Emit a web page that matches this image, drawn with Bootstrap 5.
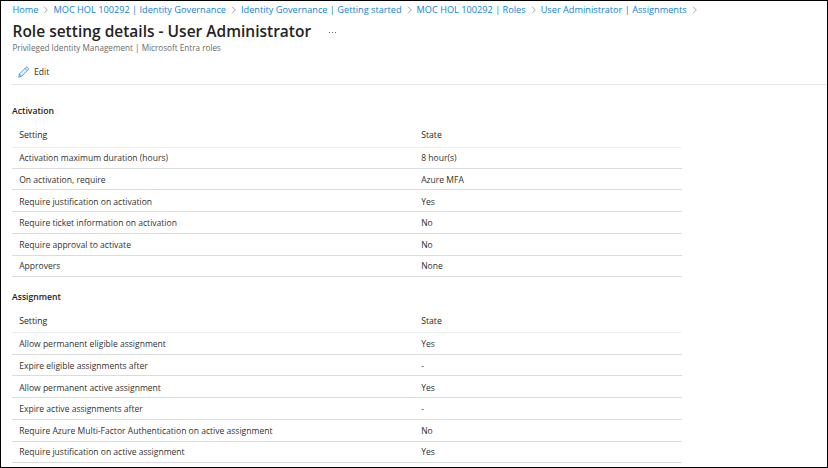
<!DOCTYPE html>
<html lang="en">
<head>
<meta charset="utf-8">
<title>Role setting details - User Administrator</title>
<link href="https://cdn.jsdelivr.net/npm/bootstrap@5.3.0/dist/css/bootstrap.min.css" rel="stylesheet">
<style>
  body { font-family: "Open Sans", "Noto Sans", sans-serif; font-size: 8.56px; line-height: 12px; color: #323130; }
  .blade { height: 468px; border: 1px solid #000; padding-left: 11px; }
  .trail { height: 19px; padding: 0 0 2px .5px; font-size: 9.2px; }
  .trail a { color: #0f7fd6; }
  .trail svg { width: 15px; height: 8px; margin-top: 1px; }
  .blade-title { font-size: 15.5px; line-height: 22px; padding-left: .5px; font-weight: 600; color: #24231f; }
  .more { margin-left: 17px; width: 9px; height: 3px; margin-top: 2px; }
  .blade-sub { font-size: 8.17px; line-height: 11px; padding-left: .4px; color: #6c6a68; }
  .commands { height: 32px; border-bottom: 1px solid #e4e4e4; padding: 6px 0 0 6px; }
  .commands button { color: #323130; gap: 5px; }
  .group-name { font-size: 8.65px; line-height: 12px; font-weight: 600; color: #1f1e1c; }
  .settings { width: 670px; table-layout: fixed; border-collapse: separate; border-spacing: 0; }
  .settings th, .settings td { padding: 0 0 0 7.2px; vertical-align: middle; border-bottom: 1px solid #dadbdc; }
  .settings th { height: 25px; font-weight: 400; font-size: 8.68px; border-color: #efefef; color: #262523; }
  .settings th:first-child { width: 402px; }
  .settings tr:nth-child(2) td, .settings tr:nth-child(3) td { padding-top: 2px; }
  .activation { padding-top: 20px; }
  .activation .settings { margin-top: 6px; }
  .assignment { padding-top: 14px; }
  .assignment .settings { margin-top: 7px; }
  .assignment th { height: 23px; }
  .tall td { height: 22px; }
  .short td { height: 21px; }
</style>
</head>
<body>
<main class="blade overflow-hidden bg-white">
  <nav aria-label="breadcrumb">
    <ol class="trail list-unstyled d-flex align-items-center mb-0 text-nowrap">
      <li class="d-flex align-items-center"><a class="text-decoration-none" href="#">Home</a><svg viewBox="0 0 15 8" fill="none" stroke="#a5a5a5"><path d="M6 .7 9.3 4 6 7.3"/></svg></li>
      <li class="d-flex align-items-center"><a class="text-decoration-none" href="#">MOC HOL 100292 | Identity Governance</a><svg viewBox="0 0 15 8" fill="none" stroke="#a5a5a5"><path d="M6 .7 9.3 4 6 7.3"/></svg></li>
      <li class="d-flex align-items-center"><a class="text-decoration-none" href="#">Identity Governance | Getting started</a><svg viewBox="0 0 15 8" fill="none" stroke="#a5a5a5"><path d="M6 .7 9.3 4 6 7.3"/></svg></li>
      <li class="d-flex align-items-center"><a class="text-decoration-none" href="#">MOC HOL 100292 | Roles</a><svg viewBox="0 0 15 8" fill="none" stroke="#a5a5a5"><path d="M6 .7 9.3 4 6 7.3"/></svg></li>
      <li class="d-flex align-items-center"><a class="text-decoration-none" href="#">User Administrator | Assignments</a><svg viewBox="0 0 15 8" fill="none" stroke="#a5a5a5"><path d="M6 .7 9.3 4 6 7.3"/></svg></li>
    </ol>
  </nav>
  <header>
    <div class="d-flex align-items-center">
      <h1 class="blade-title mb-0">Role setting details - User Administrator</h1>
      <svg class="more" viewBox="0 0 9 3" fill="#605e5c"><path d="M1 1h1v1H1zM4 1h1v1H4zM7 1h1v1H7z"/></svg>
    </div>
    <p class="blade-sub mb-0">Privileged Identity Management | Microsoft Entra roles</p>
  </header>
  <div class="commands d-flex align-items-center">
    <button class="d-flex align-items-center border-0 bg-transparent p-0" type="button">
      <svg width="11" height="12" viewBox="0 0 11 12" fill="#e6f3fc" stroke="#3a96dd" stroke-width=".9" stroke-linejoin="round"><path d="M.6 11.2 1.4 8 8 1.4Q8.7.7 9.4 1.4L10.2 2.2Q10.9 2.9 10.2 3.6L3.6 10.3ZM7 2.4 9.2 4.6M1.4 8 3.6 10.3"/></svg>
      <span>Edit</span>
    </button>
  </div>
  <section class="activation">
    <h2 class="group-name mb-0">Activation</h2>
    <table class="settings">
      <thead><tr><th>Setting</th><th>State</th></tr></thead>
      <tbody>
        <tr class="short"><td>Activation maximum duration (hours)</td><td>8 hour(s)</td></tr>
        <tr class="short"><td>On activation, require</td><td>Azure MFA</td></tr>
        <tr class="tall"><td>Require justification on activation</td><td>Yes</td></tr>
        <tr class="tall"><td>Require ticket information on activation</td><td>No</td></tr>
        <tr class="tall"><td>Require approval to activate</td><td>No</td></tr>
        <tr class="short"><td>Approvers</td><td>None</td></tr>
      </tbody>
    </table>
  </section>
  <section class="assignment">
    <h2 class="group-name mb-0">Assignment</h2>
    <table class="settings">
      <thead><tr><th>Setting</th><th>State</th></tr></thead>
      <tbody>
        <tr class="tall"><td>Allow permanent eligible assignment</td><td>Yes</td></tr>
        <tr class="short"><td>Expire eligible assignments after</td><td>-</td></tr>
        <tr class="tall"><td>Allow permanent active assignment</td><td>Yes</td></tr>
        <tr class="tall"><td>Expire active assignments after</td><td>-</td></tr>
        <tr class="tall"><td>Require Azure Multi-Factor Authentication on active assignment</td><td>No</td></tr>
        <tr class="short"><td>Require justification on active assignment</td><td>Yes</td></tr>
      </tbody>
    </table>
  </section>
</main>
<script src="https://cdn.jsdelivr.net/npm/bootstrap@5.3.0/dist/js/bootstrap.bundle.min.js"></script>
</body>
</html>
